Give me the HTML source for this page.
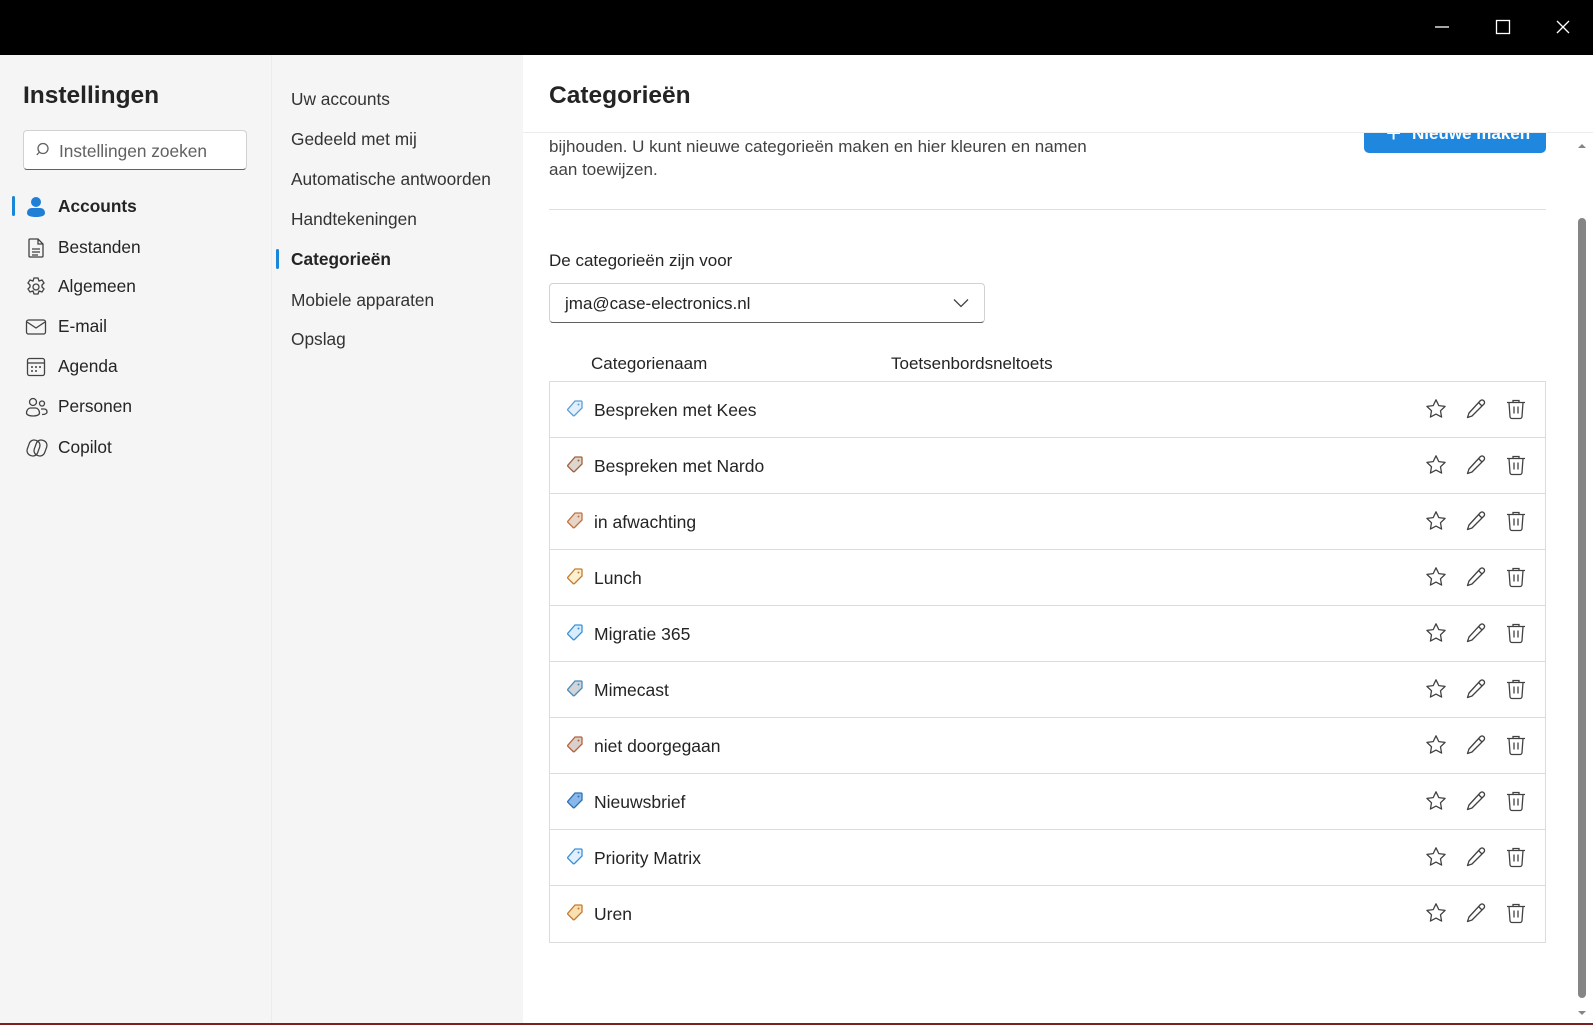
<!DOCTYPE html>
<html><head><meta charset="utf-8">
<style>
*{box-sizing:border-box;margin:0;padding:0}
body{width:1593px;height:1025px;overflow:hidden;font-family:"Liberation Sans",sans-serif;color:#242424;background:#fff;position:relative}
.top{position:absolute;left:0;top:0;width:1593px;height:55px;background:#000}
.top svg{position:absolute;top:19px}
.col1{position:absolute;left:0;top:55px;width:272px;height:970px;background:#f5f5f5;border-right:1px solid #ececec}
.col2{position:absolute;left:272px;top:55px;width:251px;height:970px;background:#f5f5f5}
h1{position:absolute;left:23px;top:82px;font-size:24.5px;font-weight:bold;color:#242424}
.search{position:absolute;left:23px;top:130px;width:224px;height:40px;background:#fff;border:1px solid #d1d1d1;border-bottom:1px solid #616161;border-radius:4px}
.search span{position:absolute;left:35px;top:10px;font-size:17.3px;color:#616161}
.search svg{position:absolute;left:12px;top:11px}
.nav{position:absolute;left:58px;font-size:17.3px;color:#242424}
.ico{position:absolute;left:25px}
.sel{position:absolute;width:3px;height:20px;background:#1a86d8;border-radius:2px}
.n2{position:absolute;left:291px;font-size:17.3px;color:#333}
.hdr{position:absolute;left:523px;top:55px;width:1070px;height:78px;background:#fff;border-bottom:1px solid #ececec;z-index:3}
.hdr div{position:absolute;left:26px;top:27px;font-size:24.5px;font-weight:bold}
.btn{position:absolute;left:1364px;top:112px;width:182px;height:41px;background:#1f88de;border-radius:5px;z-index:2;color:#fff;font-weight:bold;font-size:17px}
.t{position:absolute;font-size:17px;color:#424242}
.dd{position:absolute;left:549px;top:283px;width:436px;height:40px;border:1px solid #d1d1d1;border-bottom-color:#616161;border-radius:4px}
.dd span{position:absolute;left:15px;top:10px;font-size:17px;color:#242424}
.tbl{position:absolute;left:549px;top:381px;width:997px;height:562px;border:1px solid #dcdcdc}
.row{position:absolute;left:0;width:995px;height:56px;border-bottom:1px solid #dcdcdc}
.row .nm{position:absolute;left:44px;top:18px;font-size:17.5px;color:#242424}
.row svg{position:absolute}
.sb{position:absolute;left:1578px;top:218px;width:8px;height:780px;background:#858585;border-radius:4px}
</style></head><body>
<div class="top">
<svg style="left:1434px" width="16" height="16"><line x1="1" y1="8" x2="15" y2="8" stroke="#fff" stroke-width="1.3"/></svg>
<svg style="left:1495px" width="16" height="16"><rect x="1.5" y="1.5" width="13" height="13" fill="none" stroke="#fff" stroke-width="1.3"/></svg>
<svg style="left:1555px" width="16" height="16"><path d="M2 2L14 14M14 2L2 14" stroke="#fff" stroke-width="1.3"/></svg>
</div>
<div class="col1"></div>
<div class="col2"></div>
<h1>Instellingen</h1>
<div class="search"><svg width="16" height="16"><circle cx="7" cy="6.5" r="5" fill="none" stroke="#616161" stroke-width="1.3"/><line x1="3.5" y1="10" x2="0.8" y2="13" stroke="#616161" stroke-width="1.3"/></svg><span>Instellingen zoeken</span></div>
<div class="sel" style="left:12px;top:196px"></div>
<svg class="ico" style="top:196px" width="22" height="22"><circle cx="11" cy="6" r="5" fill="#1f7fd6"/><path d="M2 17c0-3 2-5 5-5h8c3 0 5 2 5 5v0c0 3-4 4-9 4s-9-1-9-4z" fill="#1f7fd6"/></svg>
<div class="nav" style="top:196px;font-weight:bold">Accounts</div>
<svg class="ico" style="top:237px" width="22" height="22" fill="none" stroke="#424242" stroke-width="1.3"><path d="M5 2h8l5 5v12a1 1 0 0 1-1 1H5a1 1 0 0 1-1-1V3a1 1 0 0 1 1-1zM13 2v5h5M7 12h8M7 15h8M7 18h6"/></svg>
<div class="nav" style="top:237px">Bestanden</div>
<svg class="ico" style="top:276px" width="22" height="22" fill="none" stroke="#424242" stroke-width="1.3"><path d="M9 2h4l1 3 3-1 2 3-2 2 0 2 2 2-2 3-3-1-1 3H9l-1-3-3 1-2-3 2-2v-2L3 7l2-3 3 1z"/><circle cx="11" cy="11" r="3"/></svg>
<div class="nav" style="top:276px">Algemeen</div>
<svg class="ico" style="top:316px" width="22" height="22" fill="none" stroke="#424242" stroke-width="1.3"><rect x="1.5" y="4" width="19" height="14" rx="2"/><path d="M2 6l9 6 9-6"/></svg>
<div class="nav" style="top:316px">E-mail</div>
<svg class="ico" style="top:356px" width="22" height="22" fill="none" stroke="#424242" stroke-width="1.3"><rect x="2.5" y="2.5" width="17" height="17" rx="2"/><line x1="3" y1="7" x2="19" y2="7"/><g fill="#424242" stroke="none"><circle cx="7" cy="11" r="1"/><circle cx="11" cy="11" r="1"/><circle cx="15" cy="11" r="1"/><circle cx="7" cy="15" r="1"/><circle cx="11" cy="15" r="1"/></g></svg>
<div class="nav" style="top:356px">Agenda</div>
<svg class="ico" style="top:396px" width="24" height="22" fill="none" stroke="#424242" stroke-width="1.3"><circle cx="8" cy="6" r="3.5"/><path d="M1.5 17c0-3 2-5 4-5h5c2 0 4 2 4 5 0 2-3 3-6.5 3S1.5 19 1.5 17z"/><circle cx="17" cy="7.5" r="2.5"/><path d="M16 13h3c2 0 3 1 3 3 0 1.5-2 2.5-5 2.5"/></svg>
<div class="nav" style="top:396px">Personen</div>
<svg class="ico" style="top:437px" width="24" height="22" fill="none" stroke="#424242" stroke-width="1.3"><rect x="3" y="3" width="11" height="16" rx="5" transform="rotate(20 8.5 11)"/><rect x="10" y="3" width="11" height="16" rx="5" transform="rotate(20 15.5 11)"/></svg>
<div class="nav" style="top:437px">Copilot</div>

<div class="n2" style="top:89px">Uw accounts</div>
<div class="n2" style="top:129px">Gedeeld met mij</div>
<div class="n2" style="top:169px">Automatische antwoorden</div>
<div class="n2" style="top:209px">Handtekeningen</div>
<div class="sel" style="left:276px;top:249px"></div>
<div class="n2" style="top:249px;font-weight:bold;color:#242424">Categorieën</div>
<div class="n2" style="top:290px">Mobiele apparaten</div>
<div class="n2" style="top:329px">Opslag</div>

<div class="hdr"><div>Categorieën</div></div>
<div class="btn"><span style="position:absolute;left:22px;top:6px;font-size:26px;font-weight:normal">+</span><span style="position:absolute;left:48px;top:12px">Nieuwe maken</span></div>
<svg style="position:absolute;left:1577px;top:143px" width="10" height="6"><path d="M1 5L5 1L9 5z" fill="#858585"/></svg>
<svg style="position:absolute;left:1577px;top:1010px" width="10" height="6"><path d="M1 1L5 5L9 1z" fill="#858585"/></svg>
<div class="sb"></div>
<div style="position:absolute;left:0;top:1023px;width:1593px;height:2px;background:#7a2020"></div>

<div class="t" style="left:549px;top:135px;line-height:23px">bijhouden. U kunt nieuwe categorieën maken en hier kleuren en namen<br>aan toewijzen.</div>
<div style="position:absolute;left:549px;top:209px;width:997px;height:1px;background:#e0e0e0"></div>
<div class="t" style="left:549px;top:251px;color:#242424">De categorieën zijn voor</div>
<div class="dd"><span>jma@case-electronics.nl</span><svg style="position:absolute;left:403px;top:14px" width="16" height="10"><path d="M1 1.5l7 7 7-7" fill="none" stroke="#424242" stroke-width="1.3"/></svg></div>
<div class="t" style="left:591px;top:354px;color:#242424">Categorienaam</div>
<div class="t" style="left:891px;top:354px;color:#242424">Toetsenbordsneltoets</div>

<div class="tbl">
<div class="row" style="top:0"><svg style="left:16px;top:17px" width="18" height="18"><path d="M9 2h6a1 1 0 0 1 1 1v6l-7.5 7.5a1 1 0 0 1-1.4 0L2 11.4a1 1 0 0 1 0-1.4z" fill="#e3f0fb" stroke="#5a9fd6" stroke-width="1.3"/><circle cx="12.5" cy="5.5" r="1" fill="#5a9fd6"/></svg><span class="nm">Bespreken met Kees</span></div>
<div class="row" style="top:56px"><svg style="left:16px;top:17px" width="18" height="18"><path d="M9 2h6a1 1 0 0 1 1 1v6l-7.5 7.5a1 1 0 0 1-1.4 0L2 11.4a1 1 0 0 1 0-1.4z" fill="#ddd6d0" stroke="#a0603a" stroke-width="1.3"/><circle cx="12.5" cy="5.5" r="1" fill="#a0603a"/></svg><span class="nm">Bespreken met Nardo</span></div>
<div class="row" style="top:112px"><svg style="left:16px;top:17px" width="18" height="18"><path d="M9 2h6a1 1 0 0 1 1 1v6l-7.5 7.5a1 1 0 0 1-1.4 0L2 11.4a1 1 0 0 1 0-1.4z" fill="#e6d6c8" stroke="#c07040" stroke-width="1.3"/><circle cx="12.5" cy="5.5" r="1" fill="#c07040"/></svg><span class="nm">in afwachting</span></div>
<div class="row" style="top:168px"><svg style="left:16px;top:17px" width="18" height="18"><path d="M9 2h6a1 1 0 0 1 1 1v6l-7.5 7.5a1 1 0 0 1-1.4 0L2 11.4a1 1 0 0 1 0-1.4z" fill="#fbf0d0" stroke="#c47a30" stroke-width="1.3"/><circle cx="12.5" cy="5.5" r="1" fill="#c47a30"/></svg><span class="nm">Lunch</span></div>
<div class="row" style="top:224px"><svg style="left:16px;top:17px" width="18" height="18"><path d="M9 2h6a1 1 0 0 1 1 1v6l-7.5 7.5a1 1 0 0 1-1.4 0L2 11.4a1 1 0 0 1 0-1.4z" fill="#d8ecfb" stroke="#3a90d8" stroke-width="1.3"/><circle cx="12.5" cy="5.5" r="1" fill="#3a90d8"/></svg><span class="nm">Migratie 365</span></div>
<div class="row" style="top:280px"><svg style="left:16px;top:17px" width="18" height="18"><path d="M9 2h6a1 1 0 0 1 1 1v6l-7.5 7.5a1 1 0 0 1-1.4 0L2 11.4a1 1 0 0 1 0-1.4z" fill="#d2d4d8" stroke="#4a8ab8" stroke-width="1.3"/><circle cx="12.5" cy="5.5" r="1" fill="#4a8ab8"/></svg><span class="nm">Mimecast</span></div>
<div class="row" style="top:336px"><svg style="left:16px;top:17px" width="18" height="18"><path d="M9 2h6a1 1 0 0 1 1 1v6l-7.5 7.5a1 1 0 0 1-1.4 0L2 11.4a1 1 0 0 1 0-1.4z" fill="#d8d0cc" stroke="#b8603a" stroke-width="1.3"/><circle cx="12.5" cy="5.5" r="1" fill="#b8603a"/></svg><span class="nm">niet doorgegaan</span></div>
<div class="row" style="top:392px"><svg style="left:16px;top:17px" width="18" height="18"><path d="M9 2h6a1 1 0 0 1 1 1v6l-7.5 7.5a1 1 0 0 1-1.4 0L2 11.4a1 1 0 0 1 0-1.4z" fill="#8ab8e8" stroke="#2a70b8" stroke-width="1.3"/><circle cx="12.5" cy="5.5" r="1" fill="#2a70b8"/></svg><span class="nm">Nieuwsbrief</span></div>
<div class="row" style="top:448px"><svg style="left:16px;top:17px" width="18" height="18"><path d="M9 2h6a1 1 0 0 1 1 1v6l-7.5 7.5a1 1 0 0 1-1.4 0L2 11.4a1 1 0 0 1 0-1.4z" fill="#e3f0fb" stroke="#3a90d8" stroke-width="1.3"/><circle cx="12.5" cy="5.5" r="1" fill="#3a90d8"/></svg><span class="nm">Priority Matrix</span></div>
<div class="row" style="top:504px;border-bottom:none"><svg style="left:16px;top:17px" width="18" height="18"><path d="M9 2h6a1 1 0 0 1 1 1v6l-7.5 7.5a1 1 0 0 1-1.4 0L2 11.4a1 1 0 0 1 0-1.4z" fill="#f8e0b0" stroke="#c47a30" stroke-width="1.3"/><circle cx="12.5" cy="5.5" r="1" fill="#c47a30"/></svg><span class="nm">Uren</span></div>
</div>
<div id="acts"></div>
<script>
var h='';
for(var i=0;i<10;i++){var y=381+i*56+17;
h+='<svg style="position:absolute;left:1425px;top:'+y+'px" width="22" height="22" fill="none" stroke="#424242" stroke-width="1.3" stroke-linejoin="round"><path d="M11 1.8l2.8 5.8 6.3.8-4.6 4.4 1.1 6.3L11 16.1l-5.6 3 1.1-6.3L1.9 8.4l6.3-.8z"/></svg>';
h+='<svg style="position:absolute;left:1465px;top:'+y+'px" width="22" height="22" fill="none" stroke="#424242" stroke-width="1.3" stroke-linejoin="round"><path d="M15.5 2.5a2.5 2.5 0 0 1 3.5 3.5L7 18l-4.5 1.5L4 15z"/><path d="M13.5 4.5l3.5 3.5"/></svg>';
h+='<svg style="position:absolute;left:1505px;top:'+y+'px" width="22" height="22" fill="none" stroke="#424242" stroke-width="1.3"><path d="M2 4.5h18M8 4.5V2.5h6v2M4 4.5l1 14a2 2 0 0 0 2 2h8a2 2 0 0 0 2-2l1-14M9 8.5v7M13 8.5v7"/></svg>';}
document.getElementById('acts').innerHTML=h;
</script>
</body></html>
